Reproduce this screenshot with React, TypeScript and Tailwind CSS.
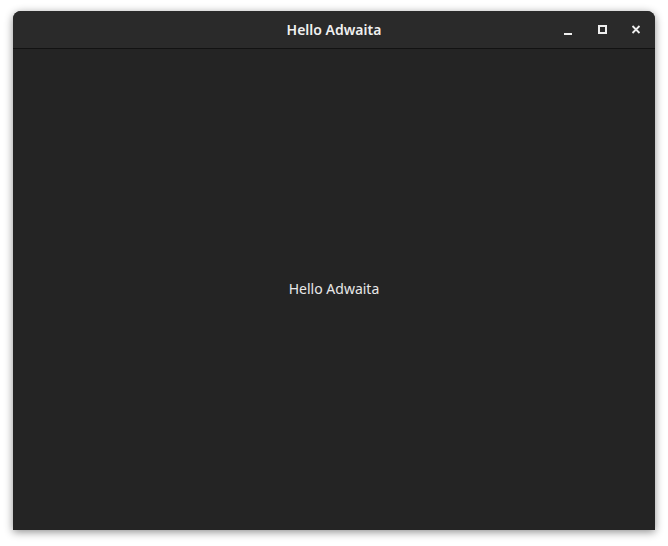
export default function App() {
  return (
    <div className="w-[668px] h-[546px] bg-white pt-[11px] pl-[13px] font-['Noto_Sans',sans-serif]">
      <div className="w-[642px] h-[519px] flex flex-col rounded-t-[8px] bg-[#242424] shadow-[0_2px_8px_rgba(0,0,0,0.45)] overflow-hidden">
        {/* Header bar */}
        <div className="relative h-[38px] shrink-0 flex items-center justify-center bg-[#2a2a2a] border-b border-[#121212]">
          <span className="text-[14px] font-semibold text-[#f0f0f0]">Hello Adwaita</span>
          <div className="absolute right-0 top-0 h-full flex items-center">
            <button className="w-[34px] h-full flex items-center justify-center">
              <svg width="16" height="16" viewBox="0 0 16 16">
                <rect x="4" y="11" width="8" height="2" fill="#eeeeee" />
              </svg>
            </button>
            <button className="w-[34px] h-full flex items-center justify-center">
              <svg width="16" height="16" viewBox="0 0 16 16">
                <rect x="5" y="4" width="7" height="7" fill="none" stroke="#eeeeee" strokeWidth="2" />
              </svg>
            </button>
            <button className="w-[34px] h-full flex items-center justify-center mr-[2px]">
              <svg width="16" height="16" viewBox="0 0 16 16">
                <path d="M4.5 4 L11.5 11 M11.5 4 L4.5 11" stroke="#eeeeee" strokeWidth="1.8" />
              </svg>
            </button>
          </div>
        </div>
        {/* Content */}
        <div className="flex-1 flex items-center justify-center pb-[2px]">
          <span className="text-[14px] text-[#e8e8e8]">Hello Adwaita</span>
        </div>
      </div>
    </div>
  );
}
